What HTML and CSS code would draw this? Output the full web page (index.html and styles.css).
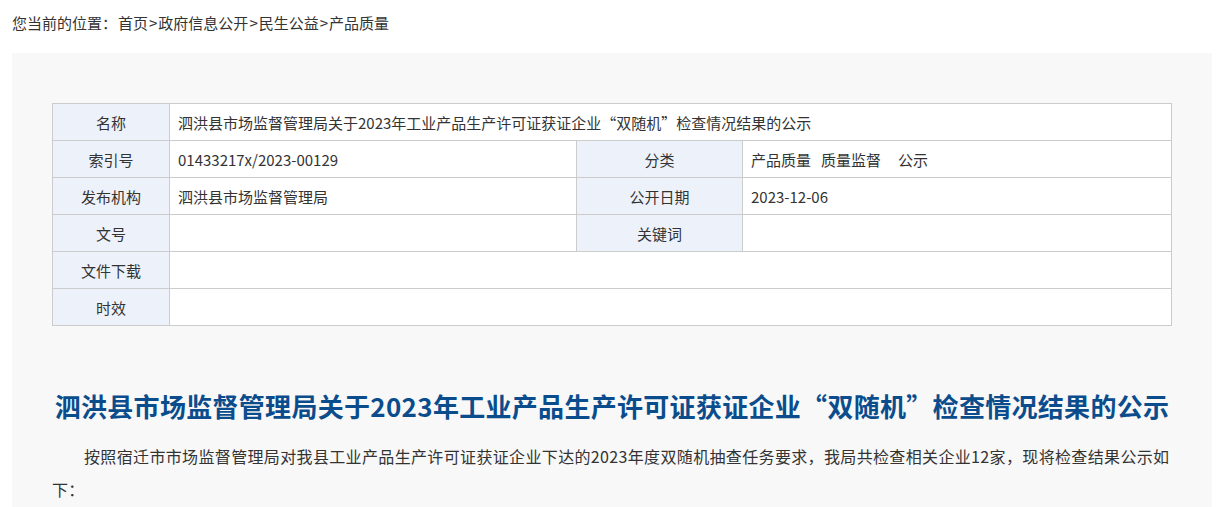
FILE: index.html
```html
<!DOCTYPE html>
<html lang="zh-CN">
<head>
  <meta charset="UTF-8">
  <meta name="viewport" content="width=device-width, initial-scale=1.0">
  <title>产品质量 - 政府信息公开</title>
  <link rel="stylesheet" href="styles.css">
</head>
<body>
  <div class="crumb">
    您当前的位置：<a href="#">首页</a>&gt;<a href="#">政府信息公开</a>&gt;<a href="#">民生公益</a>&gt;<a href="#">产品质量</a>
  </div>

  <div class="panel">
    <table class="info">
      <tr>
        <th>名称</th>
        <td colspan="3">泗洪县市场监督管理局关于2023年工业产品生产许可证获证企业“双随机”检查情况结果的公示</td>
      </tr>
      <tr>
        <th>索引号</th>
        <td class="mid">01433217x/2023-00129</td>
        <th class="th2">分类</th>
        <td>产品质量&nbsp;&nbsp;&nbsp;质量监督&nbsp;&nbsp;&nbsp;&nbsp;&nbsp;公示</td>
      </tr>
      <tr>
        <th>发布机构</th>
        <td class="mid">泗洪县市场监督管理局</td>
        <th class="th2">公开日期</th>
        <td>2023-12-06</td>
      </tr>
      <tr>
        <th>文号</th>
        <td class="mid"></td>
        <th class="th2">关键词</th>
        <td></td>
      </tr>
      <tr>
        <th>文件下载</th>
        <td colspan="3"></td>
      </tr>
      <tr>
        <th>时效</th>
        <td colspan="3"></td>
      </tr>
    </table>

    <h1 class="title">泗洪县市场监督管理局关于2023年工业产品生产许可证获证企业“双随机”检查情况结果的公示</h1>
    <div class="content">
      <p>按照宿迁市市场监督管理局对我县工业产品生产许可证获证企业下达的2023年度双随机抽查任务要求，我局共检查相关企业12家，现将检查结果公示如下：</p>
    </div>
  </div>
</body>
</html>
```

FILE: styles.css
```css
body { margin: 0; padding: 0; background: #fff; font-family: "Microsoft YaHei", "Noto Sans CJK SC", sans-serif; font-size: 15px; color: #333; }
a { color: #333; text-decoration: none; }
.crumb { padding: 12px 12px 0; height: 53px; line-height: 22px; box-sizing: border-box; }
.crumb a { margin: 0 1px; }
.panel { width: 1200px; margin: 0 12px; background: #f8f8f8; padding: 50px 0 20px; box-sizing: border-box; }
.info { width: 1120px; margin: 0 auto; border-collapse: collapse; background: #fff; }
.info th, .info td { border: 1px solid #ccc; height: 37px; padding: 0; box-sizing: border-box; font-weight: normal; }
.info th { width: 117px; background: #edf2fa; text-align: center; }
.info th.th2 { width: 166px; }
.info td { padding-left: 8px; text-align: left; }
.info td.mid { width: 407px; }
.title { margin: 64px 0 0; text-align: center; font-size: 26px; font-weight: bold; color: #0b4d8c; line-height: 32px; letter-spacing: 0.3px; }
.content { padding: 0 40px; }
.content p { margin: 18px 0 0; font-size: 16px; text-indent: 2em; line-height: 33px; letter-spacing: 0.35px; }
```
